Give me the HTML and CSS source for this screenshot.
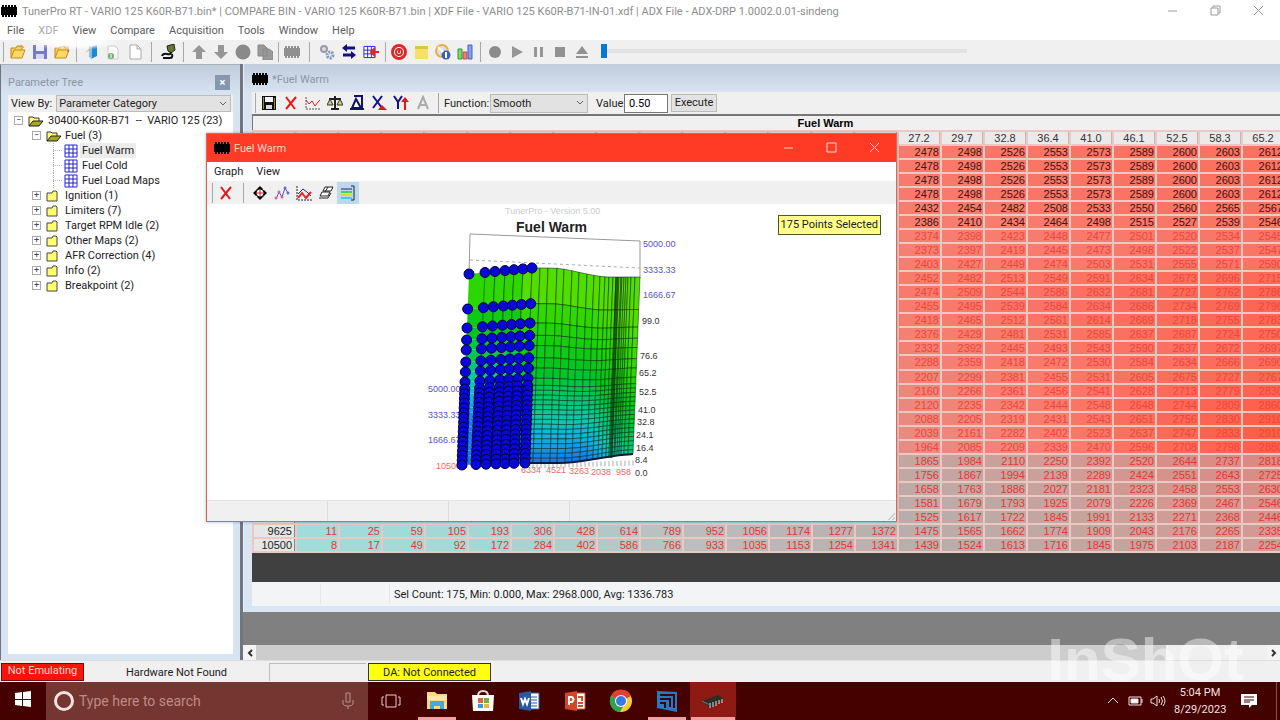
FILE: index.html
```html
<!DOCTYPE html>
<html lang="en">
<head>
<meta charset="utf-8">
<title>TunerPro RT</title>
<link rel="stylesheet" href="styles.css">
</head>
<body>
<svg class="defs" aria-hidden="true">
  <defs>
    <symbol id="chip" viewBox="0 0 16 12"><path d="M0 2h16v8H0z"/><path d="M1 0h2v12H1zM4 0h2v12H4zM7 0h2v12H7zM10 0h2v12h-2zM13 0h2v12h-2z"/></symbol>
    <symbol id="openfolder" viewBox="0 0 16 12"><path d="M1 11V2h4l1 1h5v3" fill="#ffff80" stroke="#333"/><path d="M1 11l4-5h10l-4 5z" fill="#a8a820" stroke="#222"/></symbol>
    <symbol id="folder" viewBox="0 0 12 12"><path d="M1 3h5l1-2h3l1 1v9H1z" fill="#ffff70" stroke="#444"/></symbol>
    <symbol id="grid" viewBox="0 0 14 14"><path d="M1 1h12v12H1z" fill="#fff" stroke="#2222dd"/><path d="M5 1v12M9 1v12M1 5h12M1 9h12" stroke="#2222bb" fill="none"/></symbol>
    <symbol id="xred" viewBox="0 0 16 16"><path d="M3 2l9 12M13 2L3 14" stroke="#e81818" stroke-width="2" fill="none"/></symbol>
    <symbol id="folderyellow" viewBox="0 0 16 16"><path d="M1 14V4h5l1-2h5v4" fill="#f8d060" stroke="#c08820"/><path d="M1 14l3-8h11l-3 8z" fill="#ffd868" stroke="#c88a18"/></symbol>
  </defs>
</svg>

<header class="titlebar">
  <svg class="chip-icon"><use href="#chip"/></svg>
  <h1 class="app-title">TunerPro RT - VARIO 125 K60R-B71.bin* | COMPARE BIN - VARIO 125 K60R-B71.bin | XDF File - VARIO 125 K60R-B71-IN-01.xdf | ADX File - ADX-DRP 1.0002.0.01-sindeng</h1>
  <div class="window-controls">
    <button aria-label="Minimize"><svg viewBox="0 0 12 12"><path d="M1 6h9"/></svg></button>
    <button aria-label="Restore"><svg viewBox="0 0 12 12"><path d="M1 3h7v7H1zM3 3V1h7v7H8"/></svg></button>
    <button aria-label="Close"><svg viewBox="0 0 12 12"><path d="M1 1l9 9M10 1l-9 9"/></svg></button>
  </div>
</header>

<nav class="menubar">
  <button>File</button><button class="worn">XDF</button><button>View</button><button>Compare</button><button>Acquisition</button><button>Tools</button><button>Window</button><button>Help</button>
</nav>

<div class="toolbar main-toolbar">
  <span class="sep edge"></span>
  <button aria-label="Open"><svg viewBox="0 0 16 16"><use href="#folderyellow"/><path d="M9 3q3-3 5 1" fill="none" stroke="#c8a030"/></svg></button>
  <button aria-label="Save"><svg viewBox="0 0 16 16"><path d="M1 1h14v14H1z" fill="#7878c8"/><path d="M4 1h8v6H4z" fill="#eef"/><path d="M4 10h8v5H4z" fill="#d8d8f0"/></svg></button>
  <button aria-label="Close file"><svg viewBox="0 0 16 16"><use href="#folderyellow"/><path d="M14 8V2h-4M11 0L9 2l2 2" fill="none" stroke="#8a7040"/></svg></button>
  <span class="sep s7"></span>
  <button aria-label="Open definition"><svg viewBox="0 0 16 16"><path d="M2 9l5-5V6z" fill="#e8b048"/><path d="M8 3l6-2v11l-6 3z" fill="#2088d0"/><path d="M6 2l3 1v12l-3-2z" fill="#88c0e8"/></svg></button>
  <button aria-label="Save definition"><svg viewBox="0 0 16 16"><path d="M3 2h7l3 3v10H3z" fill="#f8f8f8" stroke="#ccc"/><circle cx="6" cy="12" r="3" fill="#70b070"/><path d="M6 10v4" stroke="#fff"/></svg></button>
  <button aria-label="New"><svg viewBox="0 0 16 16"><path d="M3 1h7l4 4v10H3zM10 1v4h4" fill="#fff" stroke="#aaa"/></svg></button>
  <span class="sep s11"></span>
  <button aria-label="Connect"><svg viewBox="0 0 16 16"><path d="M7 2l7-2 1 6-4 3-3-2z" fill="#657830" stroke="#222"/><path d="M11 8q0 3-4 2t-5 2M3 14h7q3 0 2-4" fill="none" stroke="#111" stroke-width="2"/></svg></button>
  <span class="sep s9"></span>
  <button aria-label="Upload"><svg viewBox="0 0 16 16"><path d="M8 1l7 7h-4v7H5V8H1z" fill="#969696"/></svg></button>
  <button aria-label="Download"><svg viewBox="0 0 16 16"><path d="M8 15L1 8h4V1h6v7h4z" fill="#969696"/></svg></button>
  <button aria-label="Verify"><svg viewBox="0 0 16 16"><circle cx="8" cy="8" r="7.500" fill="#8a8a8a"/></svg></button>
  <button aria-label="Copy"><svg viewBox="0 0 16 16"><path d="M1 1h6l3 3v8H1zM6 5h6l4 3v8H6z" fill="#999" stroke="#888"/></svg></button>
  <span class="sep s5"></span>
  <button aria-label="Chip"><svg class="grey-chip" viewBox="0 0 16 16"><use href="#chip" y="2" width="16" height="12"/></svg></button>
  <span class="sep s13"></span>
  <button aria-label="Settings"><svg viewBox="0 0 16 16"><circle cx="5" cy="5" r="3" fill="#ddd" stroke="#99a" stroke-width="2"/><circle cx="11" cy="11" r="3" fill="#dde8f8" stroke="#89b" stroke-width="3" stroke-dasharray="2 1"/></svg></button>
  <button aria-label="Compare"><svg viewBox="0 0 16 16"><path d="M14 4H6M2 11h8" stroke="#10107a" stroke-width="3"/><path d="M6 0v8L1 4zM10 7v8l5-4z" fill="#10107a"/></svg></button>
  <button aria-label="Difference"><svg viewBox="0 0 16 16"><use href="#grid" width="13" height="16"/><path d="M16 8H8M11 5L8 8l3 3z" fill="#e22" stroke="#e22" stroke-width="2"/></svg></button>
  <span class="sep s6"></span>
  <button aria-label="Monitor"><svg viewBox="0 0 16 16"><circle cx="8" cy="8" r="6.500" fill="#fff" stroke="#e02828" stroke-width="3"/><circle cx="8" cy="8" r="3" fill="#fff" stroke="#e02828" stroke-width="2"/><path d="M8 4v5" stroke="#e02828" stroke-width="2"/></svg></button>
  <button aria-label="Notes"><svg viewBox="0 0 16 16"><path d="M2 2h13v13H2z" fill="#f5e068"/><path d="M2 2h13v3H2z" fill="#dcc838"/></svg></button>
  <button aria-label="Gauges"><svg viewBox="0 0 16 16"><circle cx="7" cy="7" r="6" fill="#ddd" stroke="#e8b040" stroke-width="2"/><circle cx="11" cy="11" r="4.500" fill="#3860c0"/><path d="M3 3l5 5M11 8v6" stroke="#fff" stroke-width="2"/></svg></button>
  <button aria-label="Charts"><svg viewBox="0 0 16 16"><path d="M1 5h4v10H1z" fill="#78d870" stroke="#389838"/><path d="M6 8h4v7H6z" fill="#f08070" stroke="#c05038"/><path d="M11 1h4v14h-4z" fill="#80a0f0" stroke="#4860c0"/></svg></button>
  <span class="sep s8"></span>
  <button aria-label="Record"><svg viewBox="0 0 16 16"><circle cx="8" cy="8" r="6" fill="#8c8c8c"/></svg></button>
  <button aria-label="Play"><svg viewBox="0 0 16 16"><path d="M3 2l11 6-11 6z" fill="#969696"/></svg></button>
  <button aria-label="Pause"><svg viewBox="0 0 16 16"><path d="M3 3h3v10H3zM9 3h3v10H9z" fill="#969696"/></svg></button>
  <button aria-label="Stop"><svg viewBox="0 0 16 16"><path d="M2 3h10v10H2z" fill="#929292"/></svg></button>
  <button aria-label="Eject"><svg viewBox="0 0 16 16"><path d="M7 2l6 8H1zM1 12h12v2H1z" fill="#929292"/></svg></button>
  <input class="seek" type="range" min="0" max="100" value="0" aria-label="Playback position">
</div>

<main class="workspace">
  <aside class="tree-panel">
    <div class="panel-title"><h2>Parameter Tree</h2><button class="panel-close" aria-label="Close panel">×</button></div>
    <div class="view-by"><label for="viewby">View By:</label><select id="viewby"><option>Parameter Category</option></select></div>
    <ul class="tree">
      <li class="l1"><span class="box">−</span><svg class="fo"><use href="#openfolder"/></svg>30400-K60R-B71 &nbsp;-- &nbsp;VARIO 125 (23)</li>
      <li class="l2"><span class="box">−</span><svg class="fo"><use href="#openfolder"/></svg>Fuel (3)</li>
      <li class="l3"><span class="twig"></span><svg class="gr"><use href="#grid"/></svg><span class="picked">Fuel Warm</span></li>
      <li class="l3"><span class="twig"></span><svg class="gr"><use href="#grid"/></svg>Fuel Cold</li>
      <li class="l3"><span class="twig last"></span><svg class="gr"><use href="#grid"/></svg>Fuel Load Maps</li>
      <li class="l2"><span class="box">+</span><svg class="fc"><use href="#folder"/></svg>Ignition (1)</li>
      <li class="l2"><span class="box">+</span><svg class="fc"><use href="#folder"/></svg>Limiters (7)</li>
      <li class="l2"><span class="box">+</span><svg class="fc"><use href="#folder"/></svg>Target RPM Idle (2)</li>
      <li class="l2"><span class="box">+</span><svg class="fc"><use href="#folder"/></svg>Other Maps (2)</li>
      <li class="l2"><span class="box">+</span><svg class="fc"><use href="#folder"/></svg>AFR Correction (4)</li>
      <li class="l2"><span class="box">+</span><svg class="fc"><use href="#folder"/></svg>Info (2)</li>
      <li class="l2"><span class="box">+</span><svg class="fc"><use href="#folder"/></svg>Breakpoint (2)</li>
    </ul>
  </aside>

  <section class="mdi">
    <div class="mdi-view">
      <article class="table-window">
        <div class="child-title"><svg class="chip-icon"><use href="#chip"/></svg><h2>*Fuel Warm</h2></div>
        <div class="toolbar child-toolbar">
          <span class="sep s6"></span>
          <button aria-label="Save"><svg viewBox="0 0 16 16"><path d="M1 1h14v14H1z" fill="#111"/><path d="M4 2h8v5H4z" fill="#f4f4f4"/><path d="M5 10h6v4H5z" fill="#ddd"/><path d="M2 2h1v12H2zM13 3h1v11h-1z" fill="#8a9430"/></svg></button>
          <button aria-label="Discard"><svg><use href="#xred"/></svg></button>
          <button aria-label="Graph"><svg viewBox="0 0 16 16"><path d="M1 2v12h14" fill="none" stroke="#555" stroke-dasharray="2 1"/><path d="M1 5l3 4 3-3 3 5 3-4 2-2" fill="none" stroke="#e02020"/></svg></button>
          <button aria-label="Compare"><svg viewBox="0 0 16 16"><path d="M8 1v12M2 4h12M4 14h8" stroke="#222" stroke-width="2"/><path d="M3 4L0 10h6zM13 4l-3 6h6z" fill="#d0d070" stroke="#333"/></svg></button>
          <button aria-label="Difference"><svg viewBox="0 0 16 16"><path d="M5 1h8v12M1 14h14" fill="none" stroke="#101080" stroke-width="2"/><path d="M7 4l5 9H3z" fill="#fff" stroke="#101060" stroke-width="2"/></svg></button>
          <button aria-label="X axis"><svg viewBox="0 0 16 16"><path d="M2 1l9 12M11 1L2 13" stroke="#101090" stroke-width="2"/><path d="M7 15h9l-5-5z" fill="#e01818"/></svg></button>
          <button aria-label="Y axis"><svg viewBox="0 0 16 16"><path d="M1 1l4 6 4-6M5 7v7" fill="none" stroke="#101090" stroke-width="2"/><path d="M12 15V5" stroke="#e01818" stroke-width="2"/><path d="M8 7l4-5 4 5z" fill="#e01818"/></svg></button>
          <button aria-label="Text"><svg viewBox="0 0 16 16"><path d="M3 14L8 2l5 12M5 10h6" fill="none" stroke="#aaa" stroke-width="2"/></svg></button>
          <span class="sep s8"></span>
          <label for="func">Function:</label>
          <select id="func"><option>Smooth</option></select>
          <label for="val" class="val-label">Value:</label>
          <input id="val" type="text" value="0.50">
          <button class="execute">Execute</button>
        </div>
        <div class="table-caption" id="cap">Fuel Warm</div>
        <table class="map" id="map" aria-labelledby="cap"></table>
        <div class="table-void"></div>
        <div class="child-status"><span></span><span></span><p>Sel Count: 175, Min: 0.000, Max: 2968.000, Avg: 1336.783</p></div>
      </article>
    </div>
    <div class="hscroll"><button aria-label="Scroll left"><svg viewBox="0 0 8 10"><path d="M6 2L3 5l3 3"/></svg></button><span class="thumb"></span><span class="rest"></span><button aria-label="Scroll right"><svg viewBox="0 0 8 10"><path d="M2 2l3 3-3 3"/></svg></button></div>
  </section>
</main>

<footer class="statusbar">
  <span class="emu">Not Emulating</span><span class="hw">Hardware Not Found</span><span class="blank"></span><span class="da">DA: Not Connected</span>
</footer>

<div class="taskbar">
  <button class="start" aria-label="Start"><svg viewBox="0 0 16 16"><path d="M0 2l7-1v7H0zM8 1l8-1v8H8zM0 9h7v6l-7-1zM8 9h8v7l-8-1z" fill="#fff"/></svg></button>
  <div class="search"><span class="ring"></span><input type="text" placeholder="Type here to search" aria-label="Type here to search"><svg viewBox="0 0 12 18"><path d="M4 1h4v9H4zM1 8v3q0 3 5 3t5-3V8M6 14v3"/></svg></div>
  <div class="apps">
    <button aria-label="Task view"><svg viewBox="0 0 24 24"><path d="M7 6h10v12H7zM5 8H3v8h2M19 8h2v8h-2" fill="none" stroke="#e8cfcf"/></svg></button>
    <button aria-label="File Explorer" class="running"><svg viewBox="0 0 24 24"><path d="M2 3h8l2 2h10v15H2z" fill="#f8d880"/><path d="M2 7h20v4H2z" fill="#ffe8a8"/><path d="M5 20v-8h14v8h-4v-3H9v3z" fill="#48a8d0"/></svg></button>
    <button aria-label="Store"><svg viewBox="0 0 24 24"><path d="M7 7q0-5 5-5t5 5" fill="none" stroke="#e8d8d8" stroke-width="2"/><path d="M1 6h22l-1 16H2z" fill="#fff"/><path d="M7 9h5v5H7z" fill="#e06040"/><path d="M13 9h5v5h-5z" fill="#78b030"/><path d="M7 15h5v4H7z" fill="#3898d8"/><path d="M13 15h5v4h-5z" fill="#f0b828"/></svg></button>
    <button aria-label="Word"><svg viewBox="0 0 24 24"><path d="M13 4h9v16h-9z" fill="#f4f6fa" stroke="#3060a8"/><path d="M14 8h6M14 11h6M14 14h6M14 17h6" stroke="#3060a8"/><path d="M2 4l12-2v20L2 20z" fill="#2858a0"/><path d="M4 9l2 6 2-5 2 5 2-6" fill="none" stroke="#fff" stroke-width="2"/></svg></button>
    <button aria-label="PowerPoint"><svg viewBox="0 0 24 24"><path d="M13 4h9v16h-9z" fill="#fff" stroke="#d05030"/><path d="M15 8h4v4M15 14h5M15 17h5" fill="none" stroke="#d05030" stroke-width="2"/><path d="M2 4l12-2v20L2 20z" fill="#d04828"/><path d="M6 16V8h3q3 2 0 5H6" fill="none" stroke="#fff" stroke-width="2"/></svg></button>
    <button aria-label="Chrome"><svg viewBox="0 0 24 24"><circle cx="12" cy="12" r="11" fill="#f8cc30"/><path d="M12 12L2 7a11 11 0 0 1 20 0z" fill="#e04030"/><path d="M12 12L2 7a11 11 0 0 0 9 16l5-9z" fill="#30a050"/><circle cx="12" cy="12" r="6" fill="#fff"/><circle cx="12" cy="12" r="5" fill="#3878e8"/></svg></button>
    <button aria-label="Projector" class="running"><svg viewBox="0 0 24 24"><path d="M2 2l20 1v20l-20-4z" fill="#2878c8"/><path d="M5 6h14v13M5 10h10v8M5 14h5v5" fill="none" stroke="#3a0508" stroke-width="2"/></svg></button>
    <button aria-label="TunerPro" class="running active"><svg viewBox="0 0 24 24"><path d="M1 12l16-6 6 4-14 9z" fill="#2c2c28"/><path d="M9 14v5M12 13v5M15 12v5M18 11v4M21 10v4" stroke="#ddd"/><path d="M1 12l8 4" stroke="#777"/></svg></button>
  </div>
  <div class="tray">
    <svg class="up" viewBox="0 0 12 12"><path d="M1 8l5-5 5 5"/></svg>
    <svg class="bat" viewBox="0 0 16 12"><path d="M1 2h12v8H1zM14 4v4"/><path d="M3 4h7v4H3z" fill="#fff"/></svg>
    <svg class="vol" viewBox="0 0 16 12"><path d="M1 4h2l4-3v10L3 8H1zM9 4q1 2 0 4M11 2q3 4 0 8M13 1q4 5 0 10"/></svg>
    <div class="clock"><span>5:04 PM</span><span>8/29/2023</span></div>
    <svg class="note" viewBox="0 0 16 16"><path d="M0 1h16v11h-5l-3 3v-3H0z" fill="#fff"/><path d="M3 4h10M3 7h10M3 9h6" stroke="#450000"/></svg>
    <span class="show-desktop"></span>
  </div>
</div>

<section class="graph-window" aria-label="Fuel Warm graph">
  <div class="graph-title"><svg class="chip-icon"><use href="#chip"/></svg><h2>Fuel Warm</h2>
    <div class="window-controls light">
      <button aria-label="Minimize"><svg viewBox="0 0 12 12"><path d="M1 6h9"/></svg></button>
      <button aria-label="Maximize"><svg viewBox="0 0 12 12"><path d="M1 1h9v9H1z"/></svg></button>
      <button aria-label="Close"><svg viewBox="0 0 12 12"><path d="M1 1l9 9M10 1l-9 9"/></svg></button>
    </div>
  </div>
  <nav class="graph-menu"><button>Graph</button><button>View</button></nav>
  <div class="toolbar graph-toolbar">
    <span class="sep s6"></span>
    <button aria-label="Discard"><svg><use href="#xred"/></svg></button>
    <span class="sep s12"></span>
    <button aria-label="Move"><svg viewBox="0 0 16 16"><path d="M8 1l4 4H4zM8 15l4-4H4zM1 8l4-4v8zM15 8l-4-4v8z"/><circle cx="8" cy="8" r="4" fill="#fff" stroke="#111"/><path d="M8 4v8M4 8h8" stroke="#e02020"/></svg></button>
    <button aria-label="Points"><svg viewBox="0 0 16 16"><path d="M2 14l3-7 3 5 3-9 3 5" fill="none" stroke="#6050b0"/><g fill="#fff" stroke="#c04080"><circle cx="2" cy="13" r="1"/><circle cx="5" cy="7" r="1"/><circle cx="8" cy="12" r="1"/></g><g fill="#fff" stroke="#3040d0"><circle cx="11" cy="3" r="1"/><circle cx="14" cy="8" r="1"/></g></svg></button>
    <button aria-label="Curves"><svg viewBox="0 0 16 16"><path d="M1 1v14h15" fill="none" stroke="#222" stroke-dasharray="2 1"/><path d="M2 9l5-5 4 3 4 4" fill="none" stroke="#2020c0"/><path d="M2 13l4-5 4 5 5-6" fill="none" stroke="#e02020" stroke-width="2"/></svg></button>
    <button aria-label="Surface"><svg viewBox="0 0 16 16"><path d="M7 2h8l-2 4H5zM4 7h8l-2 4H2zM1 13h9l3-5M7 7l3-5" fill="#fff" stroke="#222"/></svg></button>
    <button aria-label="Colour scale" class="pressed"><svg viewBox="0 0 16 16"><path d="M1 3h11v2H1z" fill="#7878b8"/><path d="M1 6h11v2H1z" fill="#50c860"/><path d="M1 9h11v2H1z" fill="#d8d840"/><path d="M1 12h11v2H1z" fill="#50c8d0"/><path d="M11 1h3v14h-3" fill="none" stroke="#222"/></svg></button>
  </div>
  <div class="canvas">
    <svg class="plot" id="plot" viewBox="420 204 264 290" role="img" aria-label="Fuel Warm surface plot"></svg>
    <output class="badge">175 Points Selected</output>
  </div>
  <div class="graph-status"><span></span><span></span><span></span><i class="resize"></i></div>
</section>

<div class="smudge"></div>
<div class="watermark">InShOt</div>
<script src="app.js"></script>
</body>
</html>
```
FILE: styles.css
```css
* { box-sizing: border-box; }
body {
  margin: 0; height: 100vh; overflow: hidden; position: relative;
  display: flex; flex-direction: column;
  font: 11px/15px Roboto, "Noto Sans", sans-serif; color: #222; background: #f0f0f0;
}
h1, h2, p, ul { margin: 0; padding: 0; font: inherit; list-style: none; }
button { font: inherit; color: inherit; border: 0; background: none; padding: 0; }
.defs { position: absolute; width: 0; height: 0; }
.chip-icon { width: 16px; height: 12px; flex: none; }

.titlebar { height: 22px; flex: none; display: flex; align-items: center; padding-left: 1px; background: #fff; }
.app-title { margin-left: 5px; flex: 1; color: #8e8e8e; white-space: nowrap; overflow: hidden; }
.window-controls { display: flex; }
.window-controls button { width: 43px; height: 20px; }
.window-controls svg { width: 12px; height: 12px; fill: none; stroke: #999; display: block; margin: auto; }
.window-controls.light svg { stroke: #ffd8d0; }

.menubar { height: 18px; flex: none; background: #fff; display: flex; gap: 14px; padding-left: 7px; color: #5c5c5c; line-height: 18px; }
.worn { color: #aaa; }

.toolbar { display: flex; align-items: center; background: #f0f0f0; }
.toolbar button { width: 22px; height: 22px; flex: none; }
.toolbar button svg { width: 16px; height: 16px; display: block; margin: auto; }
.sep { flex: none; height: 20px; background: linear-gradient(#a8a8a8, #a8a8a8) center / 1px 100% no-repeat; }
.edge { width: 7px; } .s5 { width: 5px; } .s6 { width: 6px; } .s7 { width: 7px; } .s8 { width: 8px; }
.s9 { width: 9px; } .s11 { width: 11px; } .s12 { width: 12px; } .s13 { width: 13px; }
.main-toolbar { height: 24px; flex: none; }
.grey-chip { fill: #909090; }
.seek { appearance: none; background: none; width: 366px; height: 14px; margin: 0 0 2px 7px; }
.seek::-webkit-slider-runnable-track { height: 4px; background: #e2e2e2; }
.seek::-webkit-slider-thumb { appearance: none; width: 6px; height: 14px; margin-top: -5px; background: #0878d0; }

.workspace { flex: 1; min-height: 0; display: flex; background: #707680; }
.tree-panel { width: 240px; flex: none; margin-right: 3px; padding: 0 7px 6px; display: flex; flex-direction: column; background: linear-gradient(#c1ccdc, #d7e4f2 30px); border-top: 1px solid #a8b0bc; border-left: 1px solid #70747c; }
.panel-title { height: 30px; display: flex; justify-content: space-between; align-items: flex-end; padding: 0 3px 5px 0; color: #8c96a6; }
.panel-close { width: 15px; height: 15px; line-height: 13px; background: #8697ae; color: #fff; font-weight: bold; }
.view-by { display: flex; align-items: center; padding-left: 3px; background: #f0f0f0; }
.view-by select { flex: 1; margin: 0 2px 0 4px; height: 17px; }
select { appearance: none; font: inherit; color: inherit; border: 1px solid #bbb; border-radius: 0; padding: 0 2px;
  background: #e2e2e2 url("data:image/svg+xml,%3Csvg xmlns='http://www.w3.org/2000/svg' width='9' height='6'%3E%3Cpath d='M1 1l3 3 3-3' fill='none' stroke='%23666'/%3E%3C/svg%3E") right 2px center no-repeat; }
.tree { flex: 1; background: #fff; padding-top: 1px; }
.tree li { height: 15px; display: flex; align-items: center; white-space: nowrap; }
.tree svg { flex: none; }
.box { width: 9px; height: 9px; flex: none; border: 1px solid #aaa; background: #fff; color: #446; font-size: 9px; line-height: 7px; text-align: center; margin-right: 5px; }
.l1 { padding-left: 6px; } .l2 { padding-left: 24px; } .l3 { padding-left: 45px; }
.fo { width: 16px; height: 12px; margin-right: 4px; }
.l2 .fo { margin-right: 3px; }
.fc { width: 12px; height: 12px; margin-right: 7px; }
.gr { width: 14px; height: 14px; margin-right: 4px; }
.twig { width: 9px; height: 15px; margin-right: 2px; border-left: 1px dotted #aaa; background: linear-gradient(90deg, #bbb 50%, transparent 50%) center / 2px 1px repeat-x; }
.picked { background: #ececec; padding: 0 2px; margin-left: -2px; }

.mdi { flex: 1; min-width: 0; display: flex; flex-direction: column; }
.mdi-view { flex: 1; min-height: 0; overflow: hidden; background: #808080; }
.table-window { margin-right: -118px; padding: 0 0 6px 8px; background: linear-gradient(#c1ccdc, #d9e5f2 30px); border-left: 1px solid #eef; }
.child-title { height: 28px; display: flex; align-items: center; gap: 4px; color: #8c96a6; padding-top: 2px; }
.child-toolbar { height: 22px; }
.child-toolbar select { width: 98px; height: 19px; margin: 0 8px 0 2px; }
.child-toolbar label { width: 44px; margin-left: 2px; white-space: nowrap; }
.child-toolbar .val-label { width: 28px; margin: 0; }
.child-toolbar input { width: 44px; height: 19px; padding: 0 4px; border: 1px solid #777; font: inherit; background: #fff; }
.toolbar .execute { width: 46px; height: 18px; line-height: 14px; margin-left: 3px; border: 1px solid #bbb; background: #e2e2e2; }
.table-caption { height: 16px; border: 1px solid #777; border-width: 2px 0 0 1px; text-align: center; background: #f0f0f0; font: bold 11px/15px "Liberation Sans", Arial, sans-serif; color: #000; }
.map { border-spacing: 2px; table-layout: fixed; width: 1120px; height: 423px; background: #ecc8c3; font: 11px/12px "Liberation Sans", Arial, sans-serif; }
.map thead th { background: #eaeaea; border-right: 1px solid #bbb; font-weight: normal; color: #333; }
.map thead { background: #d8d8d8; }
.map th, .map td { padding: 0; height: 12px; overflow: hidden; }
.map td { text-align: right; padding-right: 1px; }
.map tbody th { font-weight: normal; text-align: right; padding-right: 2px; background: #e6e6e6; border-right: 1px solid #888; }
.map .top td { color: #401410; }
.map .mid td { color: #ee4638; }
.map .sel td { color: #e03a34; }
.map tr.sel { background: #d4ceca; }
.table-void { height: 29px; background: #404040; }
.child-status { height: 24px; background: #f2f4f6; display: flex; align-items: center; }
.child-status span { width: 69px; height: 20px; border-right: 1px solid #e4e6e8; }
.child-status p { margin-left: 4px; }
.hscroll { height: 15px; flex: none; display: flex; background: #f0f0f0; }
.hscroll button { width: 13px; background: #f4f4f4; }
.hscroll svg { width: 8px; height: 10px; display: block; margin: auto; fill: none; stroke: #333; stroke-width: 2; }
.thumb { flex: 9; background: #cdcdcd; }
.rest { flex: 1; }

.statusbar { height: 22px; flex: none; display: flex; align-items: center; padding: 0 1px; border-top: 1px solid #ddd; }
.statusbar span { height: 18px; line-height: 16px; text-align: center; }
.statusbar .emu { width: 83px; background: #f81408; color: #ffd8d0; border: 1px solid #701010; line-height: 14px; }
.statusbar .hw { width: 185px; line-height: 19px; }
.statusbar .blank { width: 97px; border: 1px solid #bbb; border-width: 1px 0 0 1px; margin-right: 2px; }
.statusbar .da { width: 123px; background: #ffff10; border: 1px solid #333; line-height: 17px; }

.taskbar { height: 38px; flex: none; display: flex; background: #450000; color: #f4e0e0; }
.start { width: 46px; }
.start svg { width: 16px; height: 16px; }
.search { width: 322px; background: #733630; display: flex; align-items: center; padding: 0 14px 0 8px; }
.ring { width: 20px; height: 20px; border: 3px solid #f4e0e0; border-radius: 50%; flex: none; }
.search input { flex: 1; min-width: 0; border: 0; background: none; font: 14px/20px Roboto, sans-serif; padding: 0 5px; color: #fff; }
.search input::placeholder { color: #c08a88; }
.search svg { width: 12px; height: 18px; fill: none; stroke: #c09090; }
.apps { flex: 1; display: flex; }
.apps button { width: 46px; border-bottom: 3px solid transparent; padding-top: 3px; }
.apps svg { width: 24px; height: 24px; display: block; margin: auto; }
.apps .running { background: linear-gradient(#f0a0a0, #f0a0a0) bottom / 38px 3px no-repeat; background-origin: border-box; }
.apps .active { background: linear-gradient(#f0a0a0, #f0a0a0) bottom / 44px 3px no-repeat border-box, #8e1a14; }
.tray { display: flex; align-items: center; }
.tray > svg { fill: none; stroke: #f4e0e0; height: 12px; }
.up { width: 12px; margin-right: 9px; } .bat { width: 16px; margin-right: 6px; } .vol { width: 16px; margin-right: 8px; }
.clock { display: flex; flex-direction: column; text-align: center; line-height: 17px; width: 52px; white-space: nowrap; }
.tray .note { width: 16px; height: 16px; margin: 0 19px 0 15px; stroke: none; }
.show-desktop { width: 4px; height: 38px; border-left: 1px solid #8a5050; }

.graph-window { position: absolute; left: 206px; top: 133px; width: 691px; height: 389px; display: flex; flex-direction: column; background: #fff; border: 1px solid #d86858; box-shadow: 0 0 3px rgba(0,0,0,.3); }
.graph-title { height: 28px; flex: none; display: flex; align-items: center; gap: 4px; padding-left: 7px; background: #ff3b26; color: #ffd8d0; }
.graph-title .window-controls { margin-left: auto; }
.graph-menu { height: 19px; flex: none; display: flex; gap: 13px; padding-left: 7px; line-height: 19px; }
.graph-toolbar { height: 23px; flex: none; padding-left: 2px; }
.pressed { background: #bcd8f0; }
.canvas { flex: 1; min-height: 0; position: relative; overflow: hidden; display: flex; justify-content: center; }
.plot { width: 264px; height: 290px; font: 9px "Liberation Sans", Arial, sans-serif; }
.plot .title { font: bold 14px "Liberation Sans", Arial, sans-serif; fill: #222; }
.plot .ver { fill: #ccc; }
.plot .blue { fill: #5555cc; } .plot .red { fill: #f06868; } .plot .dark { fill: #333; }
.mesh path { stroke: rgba(0, 30, 10, .5); stroke-width: 1; }
.dots circle { fill: #0808d8; stroke: #000038; }
.badge { position: absolute; top: 11px; right: 15px; height: 20px; padding: 0 2px; border: 1px solid #55552a; background: #ffff88; line-height: 18px; white-space: nowrap; }
.graph-status { height: 21px; flex: none; display: flex; background: #f0f0f0; border-top: 1px solid #e4e4e4; }
.graph-status span { width: 121px; border-right: 1px solid #ddd; }
.resize { width: 10px; height: 10px; margin: auto 1px 1px auto; background: repeating-linear-gradient(135deg, #ccc 0 1px, transparent 1px 3px); clip-path: polygon(100% 0, 100% 100%, 0 100%); }

.smudge { position: absolute; left: 30px; top: 34px; width: 90px; height: 16px; background: radial-gradient(closest-side, rgba(255,255,255,.9) 50%, transparent); }
.watermark { position: absolute; right: 36px; bottom: 38px; font: bold 60px/44px "Liberation Sans", Arial, sans-serif; color: rgba(255,255,255,.45); pointer-events: none; }
```
FILE: app.js
```js
const AXIS = ["27.2", "29.7", "32.8", "36.4", "41.0", "46.1", "52.5", "58.3", "65.2", "76.6", "99.0"];
const HIDDEN = 14;
const first = "2478 2498 2526 2553 2573 2589 2600 2603 2612";
const ROWS = [
  first, first, first, first,
  "2432 2454 2482 2508 2533 2550 2560 2565 2567",
  "2386 2410 2434 2464 2498 2515 2527 2539 2546",
  "2374 2398 2423 2448 2477 2501 2520 2534 2545",
  "2373 2397 2419 2445 2473 2498 2522 2537 2547",
  "2403 2427 2449 2474 2503 2531 2555 2571 2590",
  "2452 2482 2513 2549 2591 2634 2673 2696 2715",
  "2474 2509 2544 2586 2632 2681 2727 2762 2786",
  "2455 2495 2539 2584 2634 2686 2734 2769 2796",
  "2418 2465 2512 2561 2614 2669 2718 2755 2783",
  "2376 2429 2481 2531 2585 2637 2687 2724 2750",
  "2332 2392 2445 2493 2543 2590 2637 2672 2697",
  "2288 2359 2418 2472 2530 2584 2634 2666 2690",
  "2207 2299 2381 2455 2531 2605 2675 2727 2767",
  "2160 2266 2361 2456 2541 2628 2713 2779 2830",
  "2120 2235 2342 2444 2548 2648 2744 2809 2860",
  "2088 2205 2319 2431 2543 2651 2756 2830 2910",
  "2039 2161 2282 2402 2523 2637 2747 2833 2910",
  "1964 2085 2209 2339 2470 2596 2708 2798 2880",
  "1865 1984 2110 2250 2392 2520 2644 2737 2818",
  "1756 1867 1994 2139 2289 2424 2551 2643 2725",
  "1658 1763 1886 2027 2181 2323 2458 2553 2630",
  "1581 1679 1793 1925 2079 2226 2369 2467 2546",
  "1525 1617 1722 1845 1991 2133 2271 2368 2446",
  "1475 1565 1662 1774 1909 2043 2176 2265 2335",
  "1439 1524 1613 1716 1845 1975 2103 2187 2254"
];
const LOW = {
  27: ["9625", "11 25 59 105 193 306 428 614 789 952 1056 1174 1277 1372"],
  28: ["10500", "8 17 49 92 172 284 402 586 766 933 1035 1153 1254 1341"]
};

function ramp(stops, t) {
  t = Math.max(0, Math.min(1, t));
  let k = 1;
  while (k < stops.length - 1 && stops[k][0] < t) k++;
  const [a, ca] = stops[k - 1], [b, cb] = stops[k];
  const f = Math.max(0, (t - a) / (b - a));
  return "rgb(" + ca.map((v, i) => Math.round(v + (cb[i] - v) * f)).join(",") + ")";
}
const SELECTED = [[0, [160, 220, 218]], [0.3, [188, 190, 190]], [0.5, [184, 174, 172]], [0.75, [206, 158, 152]], [1, [222, 134, 126]]];
const NORMAL = [[0, [200, 170, 166]], [0.6, [222, 148, 140]], [0.83, [248, 124, 110]], [1, [255, 92, 72]]];

const table = document.getElementById("map");
let html = "<thead><tr><th></th>" + "<th></th>".repeat(HIDDEN) + AXIS.map(a => `<th scope="col">${a}</th>`).join("") + "</tr></thead><tbody>";
ROWS.forEach((row, r) => {
  const low = LOW[r];
  const left = low ? low[1].split(" ") : Array(HIDDEN).fill("");
  const cells = left.concat(row.split(" "), ["", ""]);
  const cls = r < 6 ? "top" : r < 22 ? "mid" : "sel";
  html += `<tr class="${cls}"><th scope="row">${low ? low[0] : ""}</th>` +
    cells.map(v => `<td style="background:${ramp(r < 22 ? NORMAL : SELECTED, v / 2950)}">${v}</td>`).join("") + "</tr>";
});
table.innerHTML = html + "</tbody>";

/* Surface plot: rpm lines run across, load lines run down. */
const X = [469, 485, 495, 505, 514, 523, 532, 540, 548, 557, 564, 572, 579, 587, 594, 600, 605, 609, 613, 616, 619, 621, 622, 624, 626, 628, 631, 635, 640];
const Y = [274, 309, 328, 340, 350, 362, 372, 382, 389];
for (let n = 1; n <= 16; n++) Y.push(389 + n * 76 / 16);
const ease = t => { t = Math.max(0, Math.min(1, t)); return t * t * (3 - 2 * t); };
function point(i, j) {
  const d = (Y[j] - 274) / 191;
  const x = X[i] - 7 * d - (i > 0 && i < 6 ? 2 * d : 0);
  const rise = (6 - 4 * d) * Math.min(1, (X[i] - 469) / 63);
  const dip = 9 * (1 - d) * ease((X[i] - 550) / 60) - 9 * d * ease((X[i] - 565) / 80);
  return [x, Y[j] - rise + dip];
}
const HEAT = [[0, [84, 222, 0]], [0.25, [40, 214, 0]], [0.5, [0, 196, 30]], [0.66, [0, 200, 100]], [0.78, [14, 200, 170]], [0.88, [16, 178, 224]], [1, [24, 120, 232]]];
let out = '<path d="M469 274L470 234L640 241L640 278" fill="none" stroke="#999"/><path d="M470 260L640 268" stroke="#aaa" stroke-dasharray="3 3"/><path d="M532 466L634 463" stroke="#aaa" stroke-width="5" stroke-dasharray="2 2" opacity=".5"/><g class="mesh">';
for (let i = 0; i < 28; i++) for (let j = 0; j < 24; j++) {
  const q = [point(i, j), point(i + 1, j), point(i + 1, j + 1), point(i, j + 1)];
  const x = q[0][0], y = q[0][1];
  const t = (y - 268) / 190 + (x < 515 ? 0.2 : 0) - Math.max(0, x - 585) / 50 * 0.3;
  out += `<path d="M${q.map(p => p.map(v => v.toFixed(1)).join(" ")).join("L")}Z" fill="${ramp(HEAT, t)}"${i === 0 ? ' style="stroke:none"' : ""}/>`;
}
const edge = [];
for (let i = 6; i < 29; i++) edge.push(point(i, 24).map(v => v.toFixed(1)).join(" "));
out += `<path d="M${edge.join("L")}" fill="none" style="stroke:#021c40;stroke-width:2"/><path d="M617 277L611 458" style="stroke:#043004;stroke-width:3;opacity:.7"/></g>`;
const label = (x, y, c, s) => `<text x="${x}" y="${y}" class="${c}">${s}</text>`;
out += label(505, 214, "ver", "TunerPro - Version 5.00") + label(516, 232, "title", "Fuel Warm");
[["5000.00", 247], ["3333.33", 273], ["1666.67", 298]].forEach(([s, y]) => { out += label(643, y, "blue", s) + label(428, y + 145, "blue", s); });
[["99.0", 642, 324], ["76.6", 640, 359], ["65.2", 639, 376], ["52.5", 639, 395], ["41.0", 638, 413], ["32.8", 637, 425], ["24.1", 636, 438], ["16.4", 636, 451], ["8.4", 635, 463], ["0.0", 635, 476]].forEach(([s, x, y]) => { out += label(x, y, "dark", s); });
[["10500", 436, 469], ["6334", 521, 473], ["4521", 546, 473], ["3263", 569, 474], ["2038", 591, 475], ["958", 616, 475]].forEach(([s, x, y]) => { out += label(x, y, "red", s); });
out += '<g class="dots">';
for (let j = 0; j < 25; j++) for (let i = 0; i < 7; i++) {
  const [x, y] = point(i, j);
  out += `<circle cx="${x.toFixed(1)}" cy="${y.toFixed(1)}" r="5"/>`;
}
document.getElementById("plot").innerHTML = out + "</g>";
```
